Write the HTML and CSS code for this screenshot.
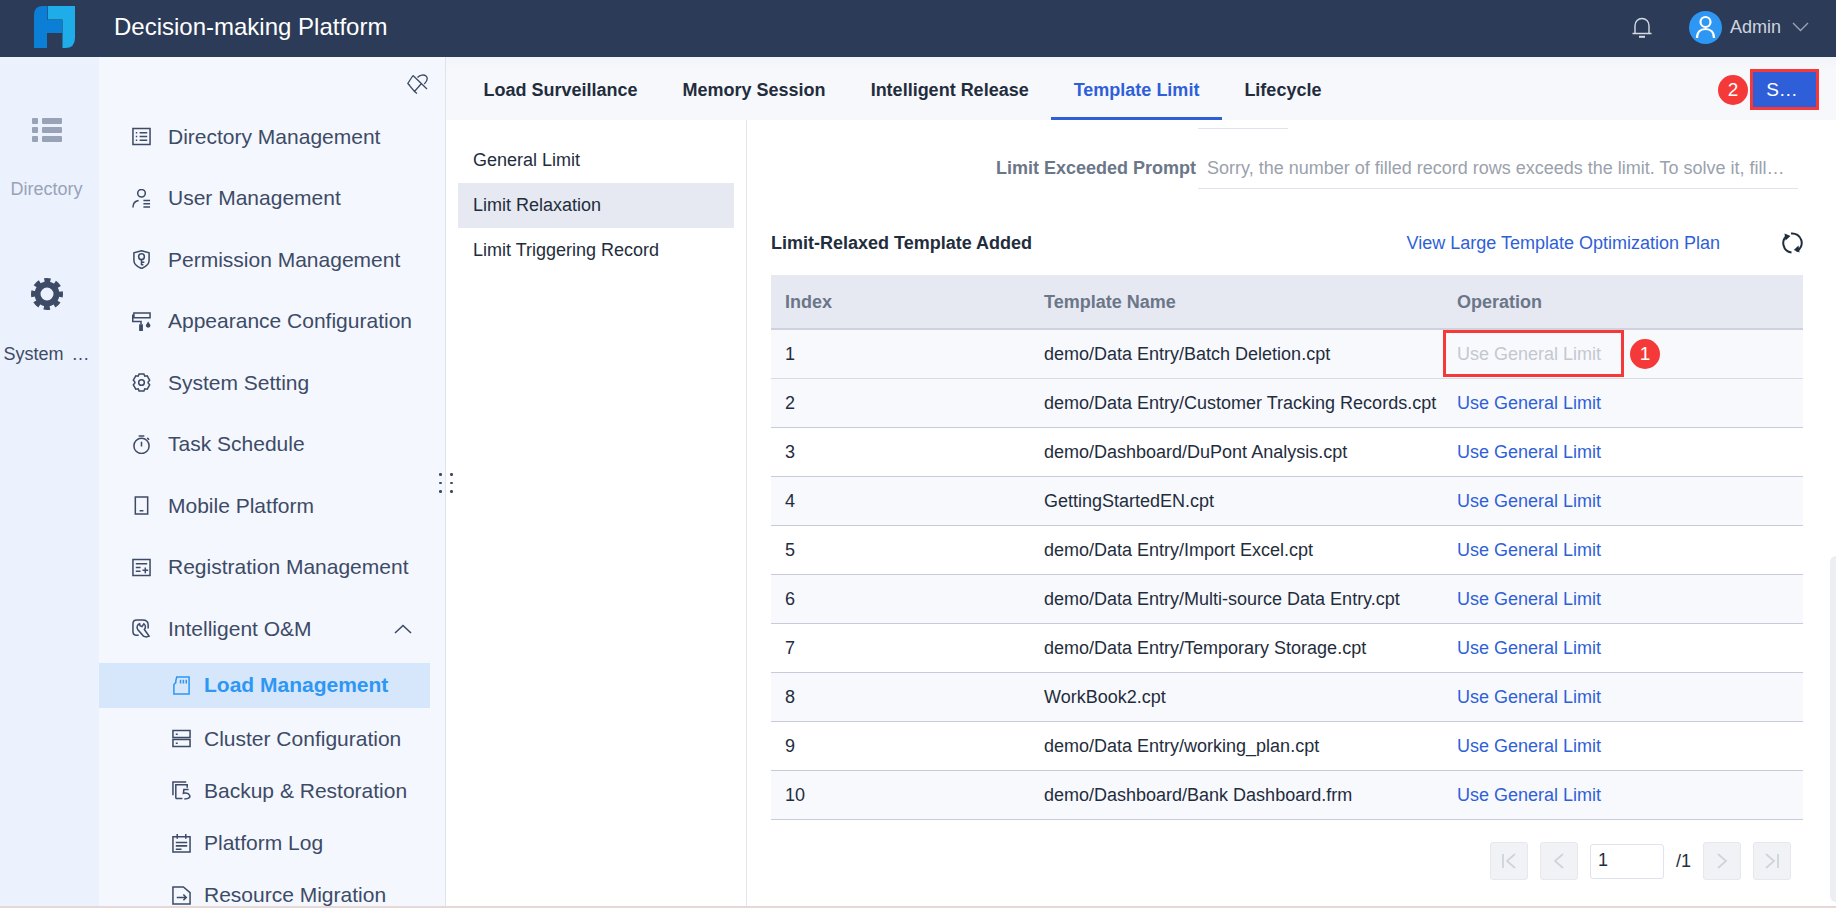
FILE: index.html
```html
<!DOCTYPE html>
<html lang="en">
<head><meta charset="utf-8"><title>Decision-making Platform</title><link rel="stylesheet" href="styles.css"></head>
<body>
<div class="app">
<header class="topbar">
  <svg class="logo" viewBox="0 0 41 42"><path d="M13.500 0H9Q0 0 0 9V42H13V27H28V14H13.500Z" fill="#0b7fd6"/><path d="M14 0H41V32Q41 42 31 42H28.500V13.500H14Z" fill="#1fade9"/></svg>
  <div class="brand">Decision-making Platform</div>
  <svg class="bell" viewBox="0 0 20 21" fill="none" stroke="#d6dbe3" stroke-width="1.400"><path d="M.5 16.500H19.500M3 16.500V8.500a7 7 0 0 1 14 0V16.500"/><path d="M7 19.800H13" stroke-width="2"/></svg>
  <div class="avatar"><svg viewBox="0 0 33 33" fill="none" stroke="#fff" stroke-width="2.200"><circle cx="16.500" cy="11" r="5"/><path d="M8 27c0-6 3.500-9 8.500-9s8.500 3 8.500 9"/></svg></div>
  <div class="admin">Admin</div>
  <svg class="caret" viewBox="0 0 17 10" fill="none" stroke="#98a3b3" stroke-width="1.400"><path d="M1 1L8.500 8.500L16 1"/></svg>
</header>
<div class="body">
  <aside class="rail">
    <div class="rail-item">
      <svg class="rail-icon" viewBox="0 0 30 24" fill="#98a3b8"><rect width="6" height="6" rx="1"/><rect x="10" width="20" height="6" rx="1"/><rect y="9" width="6" height="6" rx="1"/><rect x="10" y="9" width="20" height="6" rx="1"/><rect y="18" width="6" height="6" rx="1"/><rect x="10" y="18" width="20" height="6" rx="1"/></svg>
      <div class="rail-label">Directory</div>
    </div>
    <div class="rail-item on">
      <svg class="rail-icon gear" viewBox="0 0 32 32" fill="none" stroke="#3d4b66"><circle cx="16" cy="16" r="13.500" stroke-width="5" stroke-dasharray="6 4.600" stroke-dashoffset="3"/><circle cx="16" cy="16" r="9.500" stroke-width="6"/></svg>
      <div class="rail-label">System …</div>
    </div>
  </aside>
  <nav class="side">
    <svg class="pin" viewBox="0 0 21 20" fill="none" stroke="#3d4b66" stroke-width="1.300"><path d="M6 1.500L20 15M6 1.500L.8 9.500L7.500 17.500L14 10M10.500 3.500C13 .8 17 .3 19 2C20.800 3.800 20.300 7 17.300 10M.8 9.500L3 11.500M7.500 17.500L10 19.500"/></svg>
    <a class="nav"><svg class="ico" viewBox="0 0 20 20"><path d="M1 1.500H19V18.500H1ZM4 6H5.500M8 6H16M4 10H5.500M8 10H16M4 14H5.500M8 14H16"/></svg>Directory Management</a>
    <a class="nav"><svg class="ico" viewBox="0 0 20 20"><circle cx="10" cy="4.500" r="4"/><path d="M1 19.500c0-4 2-7 6-7.500M12 12H19M12 15.500H19M12 19H19"/></svg>User Management</a>
    <a class="nav"><svg class="ico" viewBox="0 0 20 20"><path d="M10 .8L18 3V11Q18 16 10 19.500Q2 16 2 11V3Z"/><circle cx="10" cy="7" r="3"/><path d="M10 10V16M10 13H13M10 15.500H12"/></svg>Permission Management</a>
    <a class="nav"><svg class="ico" viewBox="0 0 20 20"><path d="M2 1H19V6H2ZM2 3.500H.8V10H9.500V13"/><path class="fill" d="M7.500 13H11.500V20H7.500ZM17 10L19.500 14A2.500 2.500 0 1 1 14.500 14Z"/></svg>Appearance Configuration</a>
    <a class="nav"><svg class="ico" viewBox="0 0 20 20"><path d="M7.500 1H12.500L13.500 3.300 16 3 18.600 7.500 17 9.500V10.500L18.600 12.500 16 17 13.500 16.700 12.500 19H7.500L6.500 16.700 4 17 1.400 12.500 3 10.500V9.500L1.400 7.500 4 3 6.500 3.300Z"/><circle cx="10" cy="10" r="3"/></svg>System Setting</a>
    <a class="nav"><svg class="ico" viewBox="0 0 20 20"><circle cx="10" cy="11.500" r="8"/><path d="M7 1H13M10 7V12M16 3L18 5"/></svg>Task Schedule</a>
    <a class="nav"><svg class="ico" viewBox="0 0 20 20"><path d="M3.500 1H16.500V19H3.500ZM8 15.500H12"/></svg>Mobile Platform</a>
    <a class="nav"><svg class="ico" viewBox="0 0 20 20"><path d="M1 1.500H19V18.500H1ZM4 6H16M4 10H9M4 14H9M11 13H17M14 10V16"/></svg>Registration Management</a>
    <a class="nav"><svg class="ico" viewBox="0 0 20 20"><path d="M7 17H4Q1 17 1 13V5Q1 1 5 1H11Q17 1 17 6V10"/><path d="M8 5A4 4 0 0 0 6 11L12 18 15 19 18 18 13 11A4 4 0 0 0 12.500 5L10.500 8 8.500 7Z"/></svg>Intelligent O&amp;M<svg class="up" viewBox="0 0 18 10"><path d="M1 9L9 1.500L17 9"/></svg></a>
    <a class="sub active"><svg class="ico" viewBox="0 0 20 20"><path d="M5 1H18V19H2V9L4 7V5ZM9 4V8M12 4V8M15 4V8"/></svg>Load Management</a>
    <a class="sub"><svg class="ico" viewBox="0 0 20 20"><path d="M1 1.500H19V9H1ZM1 11H19V18.500H1ZM4 5.500H6M4 15H6"/></svg>Cluster Configuration</a>
    <a class="sub"><svg class="ico" viewBox="0 0 20 20"><path d="M1 15V1H15M4 18.500V4H16V7"/><path d="M4 18.500H11M17.500 9H12.500L12 13Q17 11.500 18.500 15T13 19"/></svg>Backup &amp; Restoration</a>
    <a class="sub"><svg class="ico" viewBox="0 0 20 20"><path d="M1 3H19V19H1ZM5.500 0V5M14.500 0V5M4 9H16M4 12.500H16M4 16H10"/></svg>Platform Log</a>
    <a class="sub"><svg class="ico" viewBox="0 0 20 20"><path d="M1 1H12L19 7V19H1ZM5 12H15M12 9L15 12L12 15"/></svg>Resource Migration</a>
  </nav>
  <div class="grip"><i></i><i></i><i></i><i></i><i></i><i></i></div>
  <main class="main">
    <div class="tabs">
      <a class="tab">Load Surveillance</a><a class="tab">Memory Session</a><a class="tab">Intelligent Release</a><a class="tab current">Template Limit</a><a class="tab">Lifecycle</a>
      <span class="badge save-badge">2</span>
      <button class="save">S…</button>
    </div>
    <div class="panes">
      <div class="menu">
        <a class="menu-item">General Limit</a>
        <a class="menu-item sel">Limit Relaxation</a>
        <a class="menu-item">Limit Triggering Record</a>
      </div>
      <section class="content">
        <div class="stub"></div>
        <div class="prompt"><label>Limit Exceeded Prompt</label><div class="field">Sorry, the number of filled record rows exceeds the limit. To solve it, fill…</div></div>
        <div class="head"><h2>Limit-Relaxed Template Added</h2><a class="link">View Large Template Optimization Plan</a><svg class="refresh" viewBox="0 0 22 22" fill="none" stroke="#1f2d3d" stroke-width="2"><path d="M6.500 3.300A9.500 9.500 0 0 0 10.500 20.600"/><path d="M10 1.500A9.500 9.500 0 0 1 15.500 19.400"/><path d="M3.500 1.500L9.500 4L4.500 8.500ZM18.500 20.500L12.800 18L17.500 13.500Z" fill="#1f2d3d" stroke="none"/></svg></div>
        <div class="table">
          <div class="row th"><span>Index</span><span>Template Name</span><span>Operation</span></div>
          <div class="row tint first"><span>1</span><span>demo/Data Entry/Batch Deletion.cpt</span><span class="off">Use General Limit<b class="mark"></b><b class="badge row-badge">1</b></span></div>
          <div class="row tint"><span>2</span><span>demo/Data Entry/Customer Tracking Records.cpt</span><a class="link">Use General Limit</a></div>
          <div class="row"><span>3</span><span>demo/Dashboard/DuPont Analysis.cpt</span><a class="link">Use General Limit</a></div>
          <div class="row tint"><span>4</span><span>GettingStartedEN.cpt</span><a class="link">Use General Limit</a></div>
          <div class="row"><span>5</span><span>demo/Data Entry/Import Excel.cpt</span><a class="link">Use General Limit</a></div>
          <div class="row tint"><span>6</span><span>demo/Data Entry/Multi-source Data Entry.cpt</span><a class="link">Use General Limit</a></div>
          <div class="row"><span>7</span><span>demo/Data Entry/Temporary Storage.cpt</span><a class="link">Use General Limit</a></div>
          <div class="row tint"><span>8</span><span>WorkBook2.cpt</span><a class="link">Use General Limit</a></div>
          <div class="row"><span>9</span><span>demo/Data Entry/working_plan.cpt</span><a class="link">Use General Limit</a></div>
          <div class="row tint"><span>10</span><span>demo/Dashboard/Bank Dashboard.frm</span><a class="link">Use General Limit</a></div>
        </div>
        <div class="pager">
          <span class="pg"><svg viewBox="0 0 16 16"><path d="M2 1V15M14 1L6 8L14 15"/></svg></span>
          <span class="pg"><svg viewBox="0 0 16 16"><path d="M12 1L4 8L12 15"/></svg></span>
          <span class="pg-input">1</span>
          <span class="pg-total">/1</span>
          <span class="pg"><svg viewBox="0 0 16 16"><path d="M4 1L12 8L4 15"/></svg></span>
          <span class="pg"><svg viewBox="0 0 16 16"><path d="M14 1V15M2 1L10 8L2 15"/></svg></span>
        </div>
      </section>
      <div class="scroll"><div class="thumb"></div></div>
    </div>
  </main>
</div>
<div class="foot"></div>
</div>
</body>
</html>
```
FILE: styles.css
```css
*{box-sizing:border-box}
html,body{margin:0;height:100%;overflow:hidden}
body{font-family:"Liberation Sans",Arial,sans-serif;color:#1f2d3d;background:#fff}
a{text-decoration:none}
.app{height:908px;display:flex;flex-direction:column;overflow:hidden}
.topbar{height:57px;flex:none;background:#2c3c58;display:flex;align-items:center;padding:0 27px 3px 34px}
.logo{width:41px;height:42px}
.brand{margin-left:39px;font-size:24px;color:#fff;flex:1}
.bell{width:20px;height:21px;margin-right:37px}
.avatar{width:33px;height:33px;border-radius:50%;background:#2e97f4;margin-right:8px}
.avatar svg{display:block;width:33px;height:33px}
.admin{font-size:18px;color:#cfd5de}
.caret{width:17px;height:10px;margin-left:11px}
.body{flex:1;min-height:0;display:flex;position:relative}
.rail{width:99px;flex:none;background:#ebf1fd;padding-right:6px}
.rail-item{display:flex;flex-direction:column;align-items:center;height:164px;padding-top:61px}
.rail-item.on{padding-top:57px}
.rail-icon{width:30px;height:24px;flex:none}
.rail-icon.gear{width:32px;height:32px}
.rail-label{font-size:18px;color:#98a3b8;margin-top:37px;white-space:nowrap;line-height:20px}
.rail-item.on .rail-label{color:#3d4b66;margin-top:34px;word-spacing:3px}
.side{width:347px;flex:none;background:#f4f7fe;border-right:1px solid #dfe3ec;overflow:hidden;position:relative;padding-top:49px}
.pin{position:absolute;left:308px;top:17px;width:21px;height:20px}
.nav,.sub{display:flex;align-items:center;font-size:21px;color:#3d4b66;white-space:nowrap}
.nav{height:61.500px;padding-left:33px}
.sub{height:52.300px;padding-left:73px}
.ico{width:19px;height:19px;margin-right:17px;fill:none;stroke:#3d4b66;stroke-width:1.600;flex:none}
.ico .fill{fill:#3d4b66;stroke:none}
.up{width:18px;height:10px;margin-left:auto;margin-right:33px;fill:none;stroke:#3d4b66;stroke-width:1.600}
.sub.active{height:45px;margin:3px 15px 5px 0;background:#d6e6fb;color:#2e97f4;font-weight:700}
.sub.active .ico{stroke:#2e97f4}
.sub .ico{margin-right:13px}
.sub:last-child{height:20px;line-height:20px;margin-top:16px}
.grip{position:absolute;left:439px;top:416px;display:grid;grid-template-columns:3px 3px;gap:6px 8px;z-index:2}
.grip i{width:2.500px;height:2.500px;background:#3d4b66;border-radius:50%}
.main{flex:1;min-width:0;display:flex;flex-direction:column}
.tabs{height:63px;flex:none;background:linear-gradient(#f2f4f8,#f7f8fc 12px);display:flex;align-items:stretch;padding-left:15px;position:relative}
.tab{font-size:18px;font-weight:700;color:#1f2d3d;padding:6px 22.500px 0;display:flex;align-items:center;border-bottom:3px solid transparent;white-space:nowrap}
.tab.current{color:#2f5fd8;border-bottom-color:#2f5fd8}
.badge{width:30px;height:30px;border-radius:50%;background:#f53838;color:#fff;font-size:19px;font-weight:400;display:flex;align-items:center;justify-content:center}
.save-badge{margin:18px 2px 0 auto}
.save{width:69px;height:41px;margin:12px 17px 0 0;padding:0 5px 0 0;background:#2f5fd8;color:#fff;border:3px solid #f53838;font:19px "Liberation Sans",Arial,sans-serif}
.panes{flex:1;min-height:0;display:flex;position:relative}
.menu{width:301px;flex:none;border-right:1px solid #e3e5ea;padding:18px 12px 0}
.menu-item{display:block;height:45px;line-height:45px;padding-left:15px;font-size:18px;color:#1f2d3d}
.menu-item.sel{background:#e6e9f1}
.content{flex:1;min-width:0;padding:0 27px 0 24px}
.stub{width:90px;height:9px;margin-left:427px;border-bottom:1px solid #dfe3ec}
.prompt{display:flex;height:51px;margin-top:9px;align-items:flex-start}
.prompt label{width:425px;margin-right:2px;padding-top:20px;line-height:20px;text-align:right;font-size:18px;font-weight:700;color:#6b7689;white-space:nowrap}
.field{width:600px;height:51px;padding:20px 0 0 9px;line-height:20px;border-bottom:1px solid #dfe3ec;font-size:18px;color:#9aa1ac;white-space:nowrap;overflow:hidden}
.head{display:flex;align-items:center;height:34px;margin-top:37px}
.head h2{margin:0;font-size:18px;font-weight:700;color:#1f2d3d;flex:1}
.head .link{font-size:18px;margin-right:61px}
.link{color:#2f5fd8}
.refresh{width:22px;height:22px}
.table{margin-top:15px}
.row{display:grid;grid-template-columns:259px 413px 1fr;align-items:center;height:49px;padding-left:14px;background:#fff;border-bottom:1px solid #c8cbd9;font-size:18px;color:#1f2d3d;white-space:nowrap}
.row.tint{background:#f8f9fd}
.row.first{border-bottom-color:#d9dbe3}
.row.th{height:55px;padding-top:1px;background:#e6e9f1;color:#6b7689;font-weight:700;border-bottom:2px solid #cfd2dc}
.off{position:relative;color:#c3c8d0}
.mark{position:absolute;left:-14px;top:-14px;width:181px;height:47px;border:3px solid #f53838}
.row-badge{position:absolute;left:173px;top:-5px}
.pager{display:flex;align-items:center;justify-content:flex-end;margin-top:22px;height:38px;padding-right:12px}
.pg{width:38px;height:38px;background:#f1f2f6;border:1px solid #e6e8ee;border-radius:3px;display:flex;align-items:center;justify-content:center;margin-left:12px}
.pg svg{width:16px;height:16px;fill:none;stroke:#cfd4dc;stroke-width:1.800}
.pg-input{width:74px;height:35px;margin-left:12px;border:1px solid #dfe3ec;border-radius:3px;padding-left:7px;font-size:18px;line-height:31px}
.pg-total{width:27px;margin:0 0 0 12px;font-size:18px}
.pg-total+.pg{margin-left:0}
.scroll{width:6px;flex:none;background:#fff}
.thumb{margin-top:436px;height:346px;background:#eceef3;border-radius:6px 0 0 6px}
.foot{height:2px;flex:none;background:#e6d8d6}
```
